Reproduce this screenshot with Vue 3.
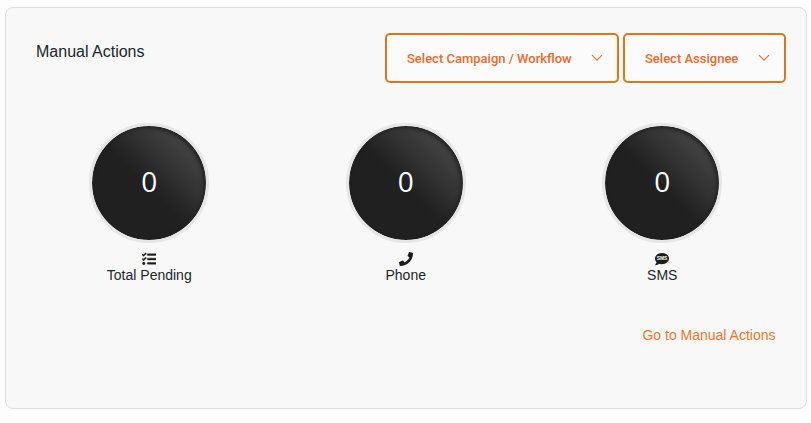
<template>
  <div class="card">
    <div class="header">
      <div class="title">Manual Actions</div>
      <div class="filters">
        <button v-for="item in filters" :key="item.text" class="select" :class="item.name">
          <span>{{ item.text }}</span>
          <svg class="arrow" viewBox="0 0 12 8">
            <path d="M1 1.2l5 5 5-5" />
          </svg>
        </button>
      </div>
    </div>
    <div class="stats">
      <div v-for="item in stats" :key="item.label" class="stat">
        <div class="circle">{{ item.count }}</div>
        <svg class="icon" :class="{ thick: item.thick }" viewBox="0 0 512 512">
          <path :d="item.icon" />
          <text v-if="item.iconText" x="256" y="308" textLength="390" lengthAdjust="spacingAndGlyphs">{{ item.iconText }}</text>
        </svg>
        <div class="label">{{ item.label }}</div>
      </div>
    </div>
    <div class="footer">
      <a class="link">Go to Manual Actions</a>
    </div>
  </div>
</template>

<script setup>
import { ref } from 'vue'

const filters = [
  { name: 'campaign', text: 'Select Campaign / Workflow' },
  { name: 'assignee', text: 'Select Assignee' }
]

const stats = ref([
  {
    label: 'Total Pending',
    count: 0,
    thick: true,
    icon: 'M139.61 35.5a12 12 0 0 0-17 0L58.93 98.81l-22.7-22.12a12 12 0 0 0-17 0L3.53 92.41a12 12 0 0 0 0 17l47.59 47.4a12.78 12.78 0 0 0 17.61 0l15.59-15.62L156.52 69a12.09 12.09 0 0 0 .09-17zm0 159.19a12 12 0 0 0-17 0l-63.68 63.72-22.7-22.1a12 12 0 0 0-17 0L3.53 252a12 12 0 0 0 0 17L51 316.5a12.77 12.77 0 0 0 17.6 0l15.7-15.69 72.2-72.22a12 12 0 0 0 .09-16.9zM64 368c-26.49 0-48.59 21.5-48.59 48S37.53 464 64 464a48 48 0 0 0 0-96zm432 16H208a16 16 0 0 0-16 16v32a16 16 0 0 0 16 16h288a16 16 0 0 0 16-16v-32a16 16 0 0 0-16-16zm0-320H208a16 16 0 0 0-16 16v32a16 16 0 0 0 16 16h288a16 16 0 0 0 16-16V80a16 16 0 0 0-16-16zm0 160H208a16 16 0 0 0-16 16v32a16 16 0 0 0 16 16h288a16 16 0 0 0 16-16v-32a16 16 0 0 0-16-16z'
  },
  {
    label: 'Phone',
    count: 0,
    icon: 'M493.4 24.6l-104-24c-11.3-2.6-22.9 3.3-27.5 13.9l-48 112c-4.2 9.8-1.4 21.3 6.9 28l60.6 49.6c-36 76.7-98.9 140.5-177.2 177.2l-49.6-60.6c-6.8-8.3-18.2-11.1-28-6.9l-112 48C3.9 366.5-2 378.1.6 389.4l24 104C27.1 504.2 36.7 512 48 512c256.1 0 464-207.5 464-464 0-11.2-7.7-20.9-18.6-23.4z'
  },
  {
    label: 'SMS',
    count: 0,
    icon: 'M256 32C114.6 32 0 125.1 0 240c0 49.6 21.4 95 57 130.7C44.5 421.1 2.7 466 2.2 466.5c-2.2 2.3-2.8 5.7-1.5 8.7S4.8 480 8 480c66.3 0 116-31.8 140.6-51.4 32.7 12.3 69 19.4 107.4 19.4 141.4 0 256-93.1 256-208S397.4 32 256 32z',
    iconText: 'SMS'
  }
])
</script>

<style>
body {
  background: #fdfdfd;
}
</style>

<style scoped>
.card {
  box-sizing: border-box;
  width: 802px;
  height: 402px;
  margin: 7px 0 0 5px;
  padding: 25px 15px 0;
  border: 1px solid #dedede;
  border-radius: 8px;
  background: #f8f8f8;
  font-family: "Liberation Sans", Arial, sans-serif;
  color: #212529;
  display: flow-root;
}
.header {
  display: flex;
  justify-content: space-between;
  height: 50px;
  padding: 0 5px 0 15px;
}
.title {
  font-size: 16px;
  line-height: 37px;
}
.filters {
  display: flex;
  gap: 4px;
}
.select {
  display: flex;
  align-items: center;
  justify-content: space-between;
  box-sizing: border-box;
  height: 50px;
  padding: 0 14px 0 20px;
  border: 2px solid #e0761a;
  border-radius: 5px;
  background: #fbfbfb;
  color: #ea6a2c;
  font-family: Roboto, sans-serif;
  font-size: 13px;
  font-weight: 500;
  white-space: nowrap;
  cursor: pointer;
}
.campaign {
  width: 234px;
}
.assignee {
  width: 163px;
}
.arrow {
  width: 12px;
  height: 8px;
  fill: none;
  stroke: #e5703a;
  stroke-width: 1.2;
}
.stats {
  display: grid;
  grid-template-columns: repeat(3, 1fr);
  margin-top: 40px;
  padding-right: 0.5px;
}
.stat {
  display: flex;
  flex-direction: column;
  align-items: center;
}
.circle {
  box-sizing: border-box;
  width: 120px;
  height: 120px;
  border: 3px solid #e6e6e6;
  border-radius: 50%;
  background: linear-gradient(45deg, #202020 48%, #545454 100%) padding-box;
  box-shadow: inset -2px 2px 4px #202020;
  color: #fff;
  font-family: "Open Sans", sans-serif;
  font-size: 28px;
  line-height: 111px;
  text-align: center;
}
.icon {
  width: 14px;
  height: 14px;
  margin-top: 9px;
  fill: #1c1c1c;
}
.thick {
  stroke: #1c1c1c;
  stroke-width: 14;
}
.icon text {
  fill: #fff;
  font-size: 195px;
  font-weight: bold;
  text-anchor: middle;
}
.label {
  font-size: 14px;
  line-height: 18px;
}
.footer {
  margin-top: 42px;
  padding-right: 15.5px;
  text-align: right;
}
.link {
  color: #ea762e;
  font-size: 14px;
  line-height: 18px;
  cursor: pointer;
}
</style>
